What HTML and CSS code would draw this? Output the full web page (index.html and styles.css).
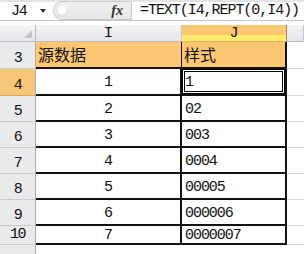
FILE: index.html
```html
<!DOCTYPE html>
<html lang="zh-CN">
<head>
    <meta charset="UTF-8">
    <title>TEXT REPT</title>
    <link rel="stylesheet" href="styles.css">
</head>
<body>
    <div class="formula-bar">
        <div class="name-box">
            <span class="cell-ref">J4</span>
            <span class="arrow"></span>
        </div>
        <div class="fx-area">
            <span class="knob"></span>
            <span class="fx">fx</span>
        </div>
        <div class="formula">=TEXT(I4,REPT(0,I4))</div>
    </div>

    <div class="sheet">
        <!-- 列标题 -->
        <div class="corner"><span class="corner-mark"></span></div>
        <div class="col-head">I</div>
        <div class="col-head active">J</div>
        <div class="col-head"></div>

        <!-- 第3行 -->
        <div class="row-head">3</div>
        <div class="cell title">源数据</div>
        <div class="cell title right">样式</div>
        <div class="cell blank"></div>

        <div class="row-head active">4</div>
        <div class="cell num">1</div>
        <div class="cell text right current">1</div>
        <div class="cell blank"></div>

        <div class="row-head">5</div>
        <div class="cell num">2</div>
        <div class="cell text right">02</div>
        <div class="cell blank"></div>

        <div class="row-head">6</div>
        <div class="cell num">3</div>
        <div class="cell text right">003</div>
        <div class="cell blank"></div>

        <div class="row-head">7</div>
        <div class="cell num">4</div>
        <div class="cell text right">0004</div>
        <div class="cell blank"></div>

        <div class="row-head">8</div>
        <div class="cell num">5</div>
        <div class="cell text right">00005</div>
        <div class="cell blank"></div>

        <div class="row-head">9</div>
        <div class="cell num">6</div>
        <div class="cell text right">000006</div>
        <div class="cell blank"></div>

        <div class="row-head">10</div>
        <div class="cell num">7</div>
        <div class="cell text right">0000007</div>
        <div class="cell blank"></div>

        <div class="row-head tail"></div>
        <div class="cell empty"></div>
        <div class="cell empty"></div>
        <div class="cell empty"></div>
    </div>
</body>
</html>
```

FILE: styles.css
```css
/* 通用 */
body {
    margin: 0;
    width: 304px;
    height: 254px;
    overflow: hidden;
    background-color: #fff;
    font-family: "Liberation Mono", "Noto Sans CJK SC", monospace;
    color: #111;
}

/* 编辑栏 */
.formula-bar {
    display: flex;
    height: 21px;
    box-sizing: border-box;
    border-top: 2px solid #e2e3e5;
    border-bottom: 1px solid #c5c7ca;
}

.name-box {
    width: 53px;
    display: flex;
    align-items: center;
    padding-left: 11px;
    box-sizing: border-box;
}

.cell-ref {
    font-size: 15px;
    letter-spacing: -1.3px;
}

.arrow {
    margin-left: 14px;
    width: 0;
    height: 0;
    border-top: 4px solid #333;
    border-left: 3px solid transparent;
    border-right: 3px solid transparent;
}

.fx-area {
    width: 78px;
    display: flex;
    align-items: center;
    justify-content: space-between;
    box-sizing: border-box;
    background: linear-gradient(#f1f1f1, #e6e6e6);
    border: 1px solid #c9cbce;
    border-right: none;
    border-radius: 9px 0 0 9px;
    margin-top: -1px;
    padding: 0 8px 0 2px;
}

.knob {
    width: 12px;
    height: 12px;
    border-radius: 50%;
    background: radial-gradient(circle at 50% 40%, #fff 0 35%, #d4d4d4 80%);
}

.fx {
    font-family: "Liberation Serif", serif;
    font-style: italic;
    font-weight: bold;
    font-size: 14px;
    color: #333;
}

.formula {
    flex: 1;
    border-left: 1px solid #c5c7ca;
    padding-left: 8px;
    font-size: 15px;
    letter-spacing: -1.05px;
    line-height: 18px;
}

/* 表格 */
.sheet {
    margin-top: 4px;
    display: grid;
    grid-template-columns: 36px 146px 105px 1fr;
    grid-template-rows: 17px 27px 27px 26px 26px 26px 26px 26px 19px 1fr;
    height: 229px;
}

.sheet > div {
    box-sizing: border-box;
    display: flex;
}

.corner {
    background: linear-gradient(#f3f4f6, #e4e6e9);
    border-right: 1px solid #b9bcc0;
    border-bottom: 1px solid #b9bcc0;
    justify-content: flex-end;
    align-items: flex-end;
    padding: 0 3px 3px 0;
}

.corner-mark {
    width: 0;
    height: 0;
    border-left: 8px solid transparent;
    border-bottom: 8px solid #c3c5c8;
}

.col-head {
    background: linear-gradient(#f3f4f6, #e3e5e8);
    border-right: 1px solid #c2c5c9;
    border-bottom: 1px solid #b9bcc0;
    justify-content: center;
    align-items: center;
    font-size: 15px;
}

.col-head.active {
    background: linear-gradient(#f9c671 0 60%, #fdeb6f 60%);
    border-right: 1px solid #a88a4a;
    border-bottom-color: #e0b25c;
}

.row-head {
    background-color: #e9eaec;
    border-right: 1px solid #a9adb2;
    border-bottom: 1px solid #c8cacd;
    justify-content: center;
    align-items: flex-end;
    padding-bottom: 1px;
    font-size: 15px;
    letter-spacing: -1.5px;
}

.row-head.active {
    background-color: #f8c677;
    border-bottom-color: #d9a95a;
}

.cell {
    align-items: center;
    border-bottom: 2px solid #111;
    border-right: 2px solid #111;
    font-size: 15px;
    letter-spacing: -1.05px;
}

.title {
    background-color: #fbc773;
    font-family: "Noto Sans CJK SC", sans-serif;
    font-size: 16px;
    letter-spacing: 0;
    align-items: flex-end;
    padding: 0 0 1px 2px;
    border-right-width: 1px;
}

.title.right {
    border-right-width: 2px;
}

.num {
    justify-content: center;
    padding-top: 2px;
}

.text {
    padding: 2px 0 0 3px;
}

.current {
    box-shadow: inset 0 0 0 1px #000, inset 0 0 0 2px #fff, inset 0 0 0 3px #000;
}

.blank {
    border-right: none;
    border-bottom: 1px solid #d6d8db;
}

.row-head.tail {
    border-bottom: none;
}

.empty {
    border: none;
}
```
